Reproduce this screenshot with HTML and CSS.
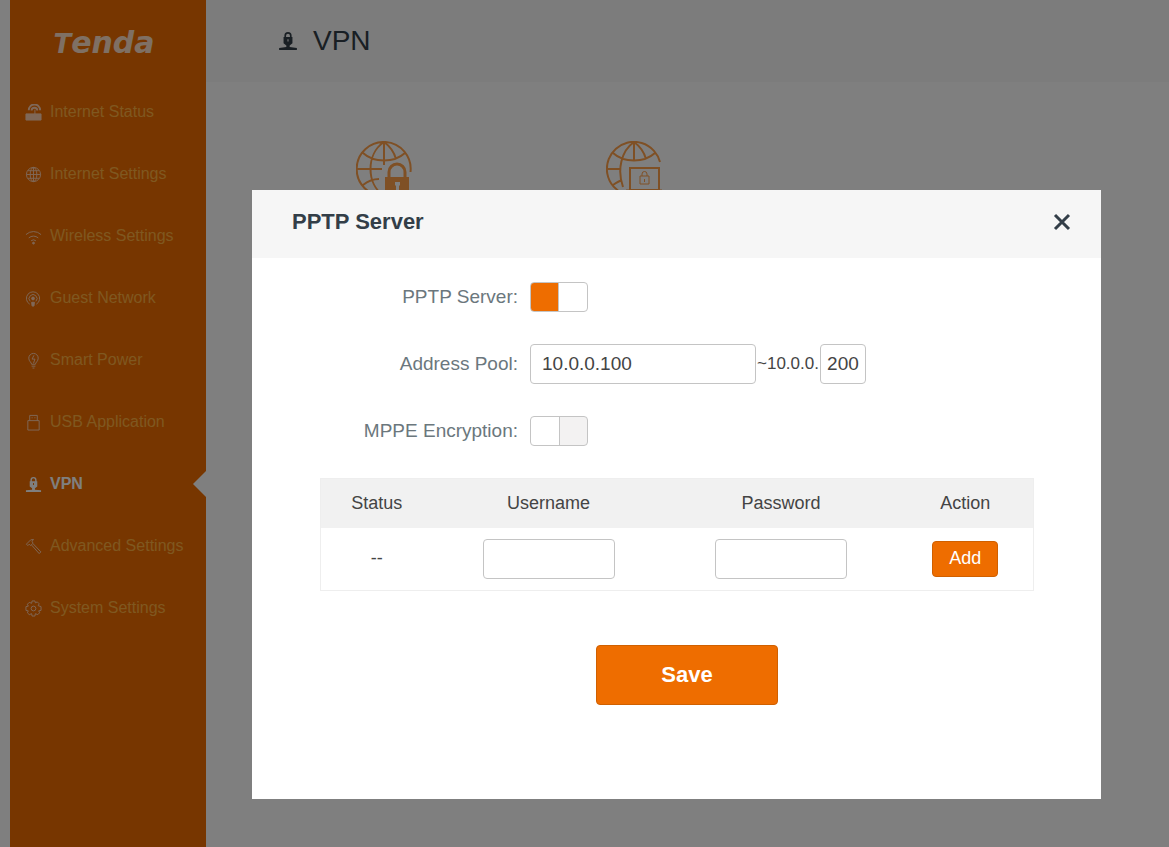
FILE: index.html
```
<!DOCTYPE html>
<html lang="en">
<head>
    <meta charset="UTF-8">
    <meta name="viewport" content="width=device-width, initial-scale=1.0">
    <title>Tenda | VPN</title>
    <link rel="stylesheet" href="styles.css">
</head>
<body>
    <div class="page">
        <aside class="sidebar">
            <div class="logo">Tenda</div>
            <nav class="menu">
                <a href="#status">
                    <svg class="icon" viewBox="0 0 18 18"><path d="M1 10.500h16V17H1z" fill="currentColor"/><path d="M4 6.500a5.500 5.500 0 0 1 12 0M7 7a3 3 0 0 1 6 0" stroke-width="2"/><path d="M10.500 6v5"/></svg>
                    Internet Status
                </a>
                <a href="#internet">
                    <svg class="icon" viewBox="0 0 18 18"><circle cx="9" cy="9" r="7.500"/><ellipse cx="9" cy="9" rx="3.500" ry="7.500"/><path d="M9 1.500v15M1.500 9h15M3 5h12M3 13h12"/></svg>
                    Internet Settings
                </a>
                <a href="#wireless">
                    <svg class="icon" viewBox="0 0 18 18"><path d="M1 7a11.500 11.500 0 0 1 16 0M4 10.500a7.500 7.500 0 0 1 10 0M6.500 13.500a4 4 0 0 1 5 0"/><circle cx="9" cy="16" r="1" fill="currentColor"/></svg>
                    Wireless Settings
                </a>
                <a href="#guest">
                    <svg class="icon" viewBox="0 0 18 18"><path d="M5 15a7 7 0 1 1 7 0M5.500 12a4.200 4.200 0 1 1 6 0"/><circle cx="8.500" cy="9" r="1.500" fill="currentColor"/><path d="M7 13h3l-.5 4h-2z" fill="currentColor"/></svg>
                    Guest Network
                </a>
                <a href="#power">
                    <svg class="icon" viewBox="0 0 18 18"><path d="M7 13c0-2-3-3-3-6.500a5 5 0 0 1 10 0c0 3.500-3 4.500-3 6.500zM7 15h4M8 17h2"/><path d="M9.500 3.500L7.500 7.500h3L9 12"/></svg>
                    Smart Power
                </a>
                <a href="#usb">
                    <svg class="icon" viewBox="0 0 18 18"><path d="M5 7V1.500h8V7M3 7h12v10H3zM7 4h1M10 4h1"/></svg>
                    USB Application
                </a>
                <a href="#vpn" class="active">
                    <svg class="icon" viewBox="0 0 18 18"><use href="#vpn-lock"/></svg>
                    VPN
                </a>
                <a href="#advanced">
                    <svg class="icon" viewBox="0 0 18 18"><path d="M1.500 6.500L6 2l3-.5L7.500 3.500l1 2L6 8 4.500 6.500 3 8zM7 7.500l8 9 1.800-1.800L8.500 6"/></svg>
                    Advanced Settings
                </a>
                <a href="#system">
                    <svg class="icon" viewBox="0 0 18 18"><path d="M7.500 1h3l.5 2 2-1 2 2-1 2 3 1v4l-2.500.5 1 2-2 2-2.500-1-.5 2.500h-3L7 14.500l-2.500 1-2-2 1-2L1 11V7l2.500-.5-1-2 2-2 2.500 1z"/><circle cx="9" cy="9" r="2.500"/></svg>
                    System Settings
                </a>
            </nav>
        </aside>

        <main class="main">
            <header class="main-header">
                <svg class="title-icon" viewBox="0 0 18 18">
                    <g id="vpn-lock">
                        <path d="M6.500 6.500V4.200a2.500 2.500 0 0 1 5 0v2.300" fill="none" stroke="currentColor" stroke-width="1.500"/>
                        <path fill-rule="evenodd" fill="currentColor" stroke="none" d="M5 5.500h8V11l-2.500 2v1.500l6.500.7V17H1v-1.800l6.500-.7V13L5 11zM8.500 7.500v2h1v-2z"/>
                    </g>
                </svg>
                <h1>VPN</h1>
            </header>
            <div class="tiles">
                <a class="tile" href="#pptp" aria-label="PPTP Server">
                    <svg viewBox="0 0 56 56">
                        <path d="M54.500 31A27 27 0 1 0 28 55M28 1v23M1 28h25M7 12c11 10 31 10 42 0M28 1C10 13 10 43 28 55M28 1c7 5 10 10 12 17M7 44c5-4 10-6 16-6"/>
                        <path d="M33 36v-5a8 8 0 0 1 16 0v5" stroke-width="3"/>
                        <path d="M29 36h24v19H29zM39 41v3l1 1v4h3v-4l1-1v-3z" fill="currentColor" fill-rule="evenodd" stroke="none"/>
                    </svg>
                </a>
                <a class="tile" href="#l2tp" aria-label="PPTP/L2TP Client">
                    <svg viewBox="0 0 56 56">
                        <path d="M54 21A27 27 0 1 0 18 53M28 1v19M1 28h14M7 12c11 10 31 10 42 0M28 1C15 10 11 29 17 46M28 1c7 5 10 10 12 17M7 44c3-2 6-4 9-5"/>
                        <path d="M24 27h29v22H24z"/>
                        <path d="M34 35h9v8h-9zM36 35v-2a2.500 2.500 0 0 1 5 0v2M38.500 38v3" stroke-width="1"/>
                        <path d="M20 50h36" stroke-width="3"/>
                    </svg>
                </a>
            </div>
        </main>
    </div>

    <div class="overlay">
        <section class="modal" role="dialog" aria-labelledby="modal-title">
            <header class="modal-header">
                <h2 id="modal-title">PPTP Server</h2>
                <button type="button" class="close" aria-label="Close">
                    <svg viewBox="0 0 18 18"><path d="M2 2l14 14M16 2L2 16"/></svg>
                </button>
            </header>
            <form class="modal-body">
                <div class="row">
                    <label for="pptp">PPTP Server:</label>
                    <input type="checkbox" id="pptp" class="switch" checked>
                </div>
                <div class="row">
                    <label for="pool-start">Address Pool:</label>
                    <div class="pool">
                        <input type="text" id="pool-start" class="text pool-start" value="10.0.0.100">
                        <span class="pool-prefix">~10.0.0.</span>
                        <input type="text" class="text pool-end" value="200" aria-label="Address pool end">
                    </div>
                </div>
                <div class="row">
                    <label for="mppe">MPPE Encryption:</label>
                    <input type="checkbox" id="mppe" class="switch">
                </div>

                <table class="users">
                    <thead>
                        <tr>
                            <th class="col-status">Status</th>
                            <th class="col-user">Username</th>
                            <th>Password</th>
                            <th class="col-action">Action</th>
                        </tr>
                    </thead>
                    <tbody>
                        <tr>
                            <td>--</td>
                            <td><input type="text" class="text" aria-label="Username"></td>
                            <td><input type="text" class="text" aria-label="Password"></td>
                            <td><button type="button" class="btn btn-add">Add</button></td>
                        </tr>
                    </tbody>
                </table>

                <div class="actions">
                    <button type="button" class="btn btn-save">Save</button>
                </div>
            </form>
        </section>
    </div>
</body>
</html>
```
FILE: styles.css
```
* {
    box-sizing: border-box;
}
body {
    margin: 0;
    background-color: #fff;
    color: #444;
    font-family: "Liberation Sans", Arial, sans-serif;
}
svg {
    fill: none;
    stroke: currentColor;
}
.page {
    display: flex;
    min-height: 100vh;
    padding-left: 10px;
    overflow: hidden;
}

/* Sidebar */
.sidebar {
    width: 196px;
    flex-shrink: 0;
    background-color: #ee6d00;
}
.logo {
    height: 81px;
    padding: 2px 8px 0 0;
    line-height: 81px;
    text-align: center;
    font-family: "DejaVu Sans", sans-serif;
    font-size: 30px;
    font-weight: bold;
    font-style: italic;
    color: #ffe0c8;
}
.logo::first-letter {
    font-size: 26px;
}
.menu a {
    position: relative;
    display: flex;
    align-items: center;
    gap: 8px;
    height: 62px;
    padding-left: 15px;
    font-size: 16px;
    color: #ffb040;
    text-decoration: none;
    white-space: nowrap;
}
.menu .icon {
    width: 17px;
    height: 17px;
    color: #ffd0b0;
}
.menu a.active,
.menu .active .icon {
    color: #fff;
    font-weight: bold;
}
.menu a.active::after {
    content: "";
    position: absolute;
    right: 0;
    top: 50%;
    margin-top: -13px;
    border: 13px solid transparent;
    border-left-width: 0;
    border-right-color: #fff;
}

/* Page content */
.main {
    flex: 1;
}
.main-header {
    display: flex;
    align-items: center;
    gap: 15px;
    height: 82px;
    padding-left: 72px;
    background-color: #f8f8f8;
    color: #333e48;
}
.main-header h1 {
    margin: 0;
    font-size: 28px;
    font-weight: normal;
}
.title-icon {
    width: 20px;
    height: 20px;
}
.tiles {
    display: flex;
    gap: 194px;
    padding: 59px 150px;
}
.tile {
    color: #ffa04a;
}
.tile svg {
    display: block;
    width: 56px;
    height: 56px;
    stroke-width: 2;
}

/* Dialog */
.overlay {
    position: absolute;
    top: 0;
    left: 0;
    width: 100%;
    min-height: 100%;
    padding: 190px 68px 48px 252px;
    background-color: rgba(0, 0, 0, 0.5);
}
.modal {
    background-color: #fff;
}
.modal-header {
    display: flex;
    justify-content: space-between;
    align-items: center;
    height: 68px;
    padding: 0 30px 4px 40px;
    background-color: #f6f6f6;
    color: #333e48;
}
.modal-header h2 {
    margin: 0;
    font-size: 22px;
}
.close {
    padding: 0;
    border: none;
    background: none;
    color: inherit;
    cursor: pointer;
}
.close svg {
    display: block;
    width: 18px;
    height: 18px;
    stroke-width: 3;
}
.modal-body {
    padding: 24px 67px 94px 68px;
}
.row {
    display: flex;
    align-items: center;
    gap: 12px;
    margin-bottom: 32px;
}
.row label {
    width: 198px;
    text-align: right;
    font-size: 19px;
    color: #6b777d;
}
.switch {
    appearance: none;
    width: 58px;
    height: 30px;
    margin: 0;
    border: 1px solid #c4c4c4;
    border-radius: 4px;
    background: linear-gradient(to right, #fff 28px, #c4c4c4 28px, #c4c4c4 29px, #f3f2f2 29px);
    cursor: pointer;
}
.switch:checked {
    background: linear-gradient(to right, #ee6d00 27px, #c4c4c4 27px, #c4c4c4 28px, #fff 28px);
}
.text {
    width: 132px;
    height: 40px;
    padding: 0 11px;
    border: 1px solid #c4c4c4;
    border-radius: 4px;
    background-color: #fff;
    font-family: inherit;
    font-size: 19px;
    color: #444;
}
.pool {
    display: flex;
    align-items: center;
}
.pool-start {
    width: 226px;
}
.pool-prefix {
    padding: 0 1px;
    font-size: 17px;
}
.pool-end {
    width: 46px;
    padding: 0;
    text-align: center;
}

.users {
    width: 100%;
    table-layout: fixed;
    border-collapse: collapse;
    border: 1px solid #eee;
    font-size: 18px;
    text-align: center;
}
.users th {
    height: 49px;
    padding: 0;
    background-color: #f1f1f1;
    font-weight: normal;
}
.users td {
    height: 63px;
    padding: 0;
}
.users .text,
.users .btn {
    vertical-align: middle;
}
.col-status {
    width: 112px;
}
.col-user {
    width: 232px;
}
.col-action {
    width: 136px;
}

.btn {
    border: 1px solid #d06000;
    border-radius: 4px;
    background-color: #ee6d00;
    color: #fff;
    font-family: inherit;
    cursor: pointer;
}
.btn-add {
    width: 66px;
    height: 36px;
    font-size: 18px;
}
.btn-save {
    width: 182px;
    height: 60px;
    font-size: 22px;
    font-weight: bold;
}
.actions {
    padding: 54px 0 0 20px;
    text-align: center;
}
```
